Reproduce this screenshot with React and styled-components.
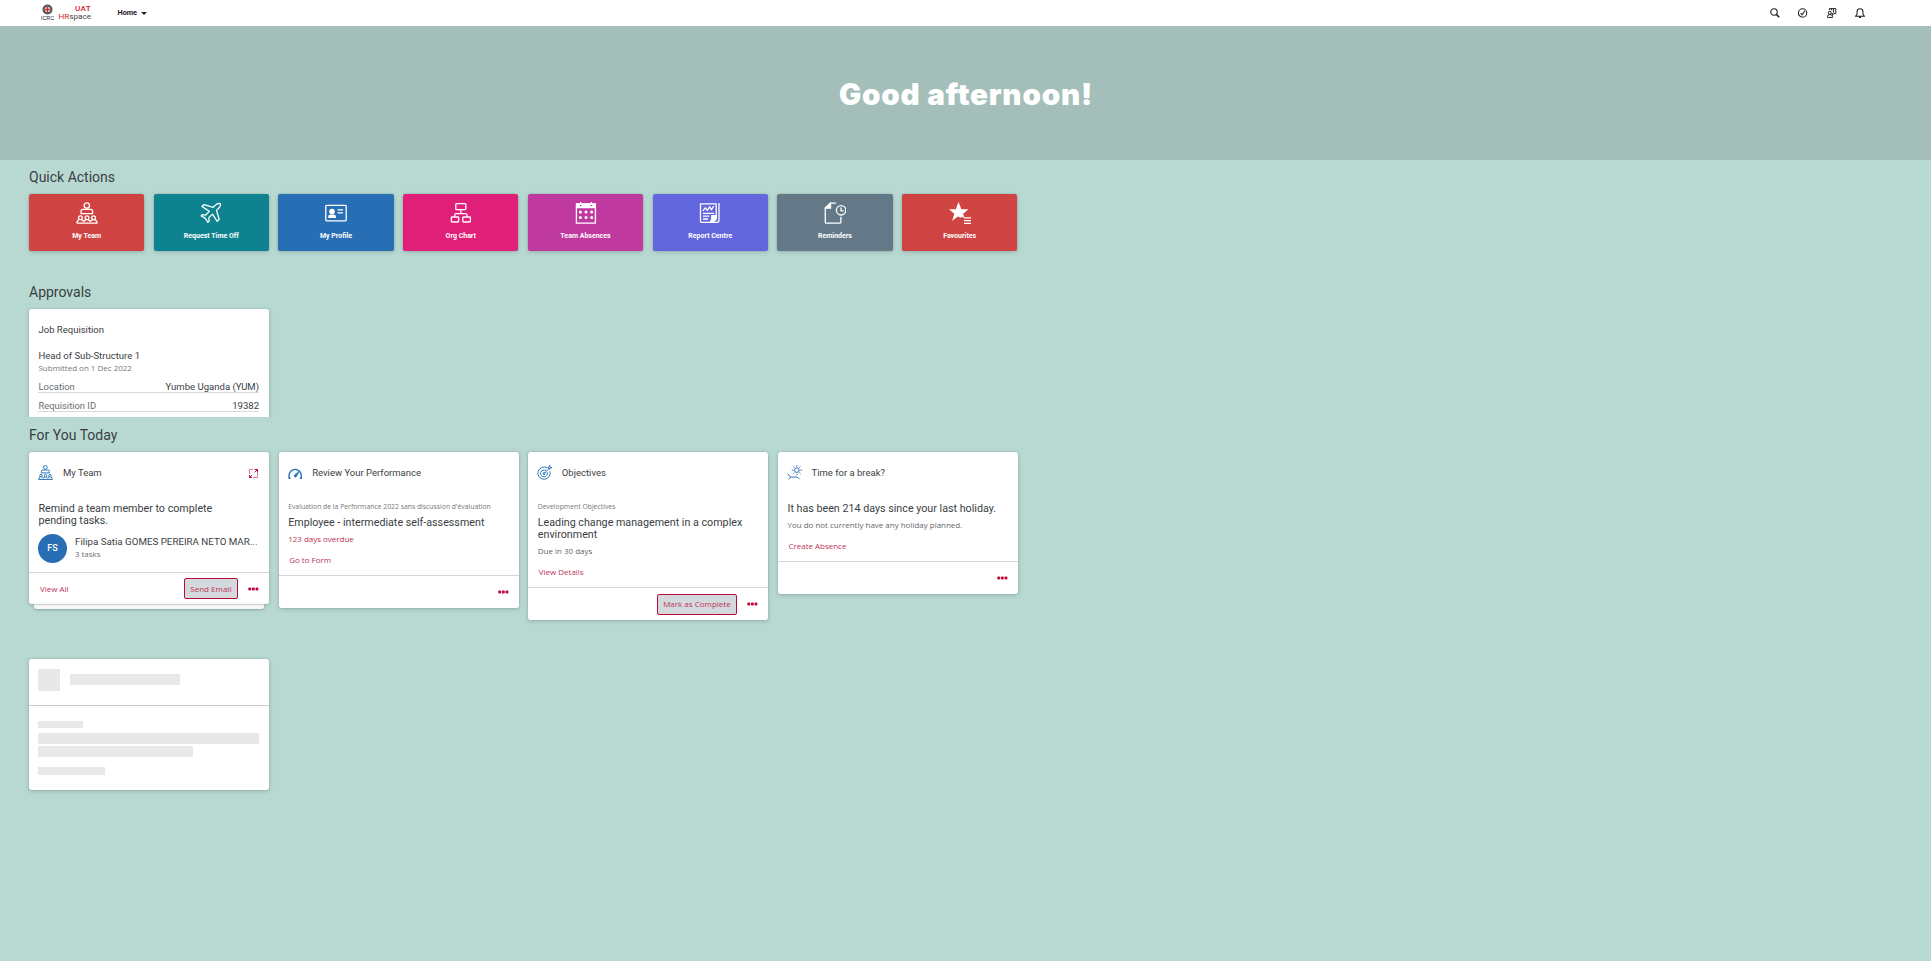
import React from "react";
import styled, { createGlobalStyle } from "styled-components";

const Global = createGlobalStyle`
  * { box-sizing: border-box; }
  body { margin: 0; background: #b8d9d2; font-family: Roboto, "Liberation Sans", sans-serif; color: #3a3e43; }
  svg { display: block; flex: none; }
`;

const Page = styled.div`
  min-height: 961px;
  background: #b8d9d2;
`;

/* Top bar */
const TopBar = styled.header`
  display: flex;
  align-items: center;
  height: 26px;
  padding: 0 66px 0 41px;
  background: #fff;
`;
const Logo = styled.div`
  display: flex;
  align-items: flex-start;
  height: 26px;
`;
const Emblem = styled.div`
  display: flex;
  flex-direction: column;
  align-items: center;
  width: 13px;
  padding-top: 4px;
  font: 400 5.4px/6px "Liberation Sans", sans-serif;
  color: #222;
`;
const Wordmark = styled.div`
  width: 33px;
  margin-left: 4px;
  padding-top: 5px;
  font-size: 8.1px;
  line-height: 7.5px;
  text-align: right;
  white-space: nowrap;
  color: #444;
`;
const Red = styled.span`
  color: #d2232a;
  font-weight: ${(p) => (p.$strong ? 500 : 400)};
  letter-spacing: ${(p) => (p.$strong ? "0.3px" : "0")};
`;
const HomeMenu = styled.button`
  display: flex;
  align-items: center;
  gap: 3.5px;
  margin-left: 26.5px;
  padding: 0;
  border: 0;
  background: none;
  font: 700 7.3px/10px Roboto, sans-serif;
  color: #1d1426;
`;
const Caret = styled.span`
  border: 3px solid transparent;
  border-top-color: #222;
  border-bottom: 0;
`;
const Tools = styled.nav`
  display: flex;
  align-items: center;
  gap: 18.3px;
  margin-left: auto;
  color: #222;
`;

const Banner = styled.div`
  display: flex;
  justify-content: center;
  height: 134px;
  padding: 48px 0 0 1px;
  background: #a4bfba;
`;
const Greeting = styled.h1`
  margin: 0;
  font: 900 29.6px/41px Inter, sans-serif;
  letter-spacing: 0.8px;
  color: #fff;
`;

/* Content */
const Main = styled.main`
  width: 1018px;
  padding: 7px 0 0 29px;
`;
const Section = styled.section`
  margin-bottom: ${(p) => p.$after || 0}px;
`;
const SectionTitle = styled.h2`
  height: 27px;
  margin: 0;
  font-weight: 400;
  font-size: 14px;
  line-height: 20px;
  color: #3a3e43;
`;
const Tiles = styled.div`
  display: grid;
  width: 988.3px;
  grid-template-columns: repeat(8, 1fr);
  gap: 9.5px;
`;
const Tile = styled.button`
  display: flex;
  flex-direction: column;
  align-items: center;
  gap: 7px;
  height: 57px;
  padding: 8px 0 0;
  border: 0;
  border-radius: 2.5px;
  background: ${(p) => p.$color};
  box-shadow: 0 0 1px rgba(70, 90, 90, 0.5), 0 1px 4px rgba(70, 90, 90, 0.3);
  font: 700 7px/10px Roboto, sans-serif;
  color: #fff;
`;
const CardRow = styled.div`
  display: grid;
  grid-template-columns: repeat(4, 240px);
  justify-content: space-between;
  align-items: start;
  height: 207px;
`;
const Card = styled.article`
  width: 240px;
  border-radius: 2.5px;
  background: #fff;
  box-shadow: 0 0 1px rgba(70, 90, 90, 0.5), 0 1px 4px rgba(70, 90, 90, 0.3);
`;
const Stack = styled.div`
  display: flex;
  flex-direction: column;
  align-items: center;
`;
const StackEdge = styled.div`
  width: 230px;
  height: 5px;
  border-radius: 0 0 2.5px 2.5px;
  background: #f7f7f7;
  box-shadow: 0 1px 3px rgba(70, 90, 90, 0.4), inset 0 1px 1px rgba(70, 90, 90, 0.25);
`;
const CardHead = styled.div`
  display: flex;
  align-items: center;
  height: ${(p) => p.$height || 50}px;
  padding: 0 10px ${(p) => (p.$height ? 0 : 8)}px 9px;
`;
const CardName = styled.h3`
  flex: 1;
  margin: 0 0 0 ${(p) => p.$indent}px;
  font-weight: 400;
  font-size: 9.5px;
  line-height: 12px;
`;
const Body = styled.div`
  padding: 0 10px ${(p) => p.$bottom ?? 10}px 9.5px;
`;
const Kicker = styled.div`
  margin-bottom: 5px;
  font-family: "Open Sans", sans-serif;
  font-size: 6.84px;
  line-height: 9px;
  white-space: nowrap;
  color: #74777a;
`;
const Headline = styled.div`
  width: ${(p) => p.$width || 215}px;
  padding-top: 0.6px;
  margin-bottom: -0.6px;
  font-size: 10.72px;
  line-height: 12px;
`;
const Meta = styled.div`
  margin-top: 6px;
  font-family: "Open Sans", sans-serif;
  font-size: 7.98px;
  line-height: 10px;
  white-space: nowrap;
  color: ${(p) => (p.$late ? "#bb3350" : "#64676a")};
`;
const Link = styled.a`
  display: block;
  margin: ${(p) => p.$top ?? 11}px 0 0 1px;
  font-family: "Open Sans", sans-serif;
  font-size: 7.98px;
  line-height: 10px;
  color: #bb3355;
`;
const Foot = styled.div`
  display: flex;
  align-items: center;
  height: ${(p) => p.$height || 33}px;
  padding: 0 10px;
  border-top: 1px solid #d5d5d5;
`;
const Spacer = styled.span`
  flex: 1;
`;
const ActionButton = styled.button`
  height: 21px;
  margin-right: 10px;
  padding: 0 5.6px;
  border: 1px solid #bb0a38;
  border-radius: 2px;
  background: #d3d9dd;
  font: 400 8px/18px "Open Sans", sans-serif;
  color: #c03558;
`;
const Person = styled.div`
  display: flex;
  align-items: center;
  gap: 8px;
  margin: 8px 0 0 -0.5px;
`;
const Avatar = styled.div`
  width: 29px;
  height: 29px;
  border-radius: 50%;
  background: #286eb4;
  font-weight: 500;
  font-size: 9px;
  line-height: 29px;
  text-align: center;
  color: #fff;
`;
const PersonName = styled.div`
  padding-bottom: 1px;
  font-size: 9.75px;
  line-height: 12px;
  white-space: nowrap;
`;
const PersonNote = styled.div`
  padding-bottom: 2px;
  font-family: "Open Sans", sans-serif;
  font-size: 7.9px;
  line-height: 11px;
  color: #6a6d70;
`;

/* Approvals */
const ApprovalClip = styled.div`
  height: 116px;
  clip-path: inset(-8px -8px 8px -8px);
`;
const ApprovalCard = styled(Card)`
  height: 130px;
`;
const ApprovalTitle = styled.div`
  font-size: 9.55px;
  line-height: 12px;
`;
const ApprovalDate = styled.div`
  margin: 1px 0;
  font-family: "Open Sans", sans-serif;
  font-size: 7.98px;
  line-height: 10px;
  color: #74777a;
`;
const Field = styled.div`
  display: flex;
  justify-content: space-between;
  margin-left: -0.5px;
  padding: 7px 0 0 0.5px;
  border-bottom: 1px solid #d9d9d9;
  font-size: 9.55px;
  line-height: 11px;
`;
const FieldName = styled.span`
  font-size: 9.4px;
  color: #6a6d70;
`;

/* Loading placeholder */
const SkeletonHead = styled.div`
  display: flex;
  gap: 10px;
  height: 47px;
  padding: 10px 9px 0;
  border-bottom: 1px solid #cbcbcb;
`;
const SkeletonBody = styled.div`
  height: 84px;
  padding: 15px 9px 0;
`;
const Bar = styled.div`
  width: ${(p) => p.$w}px;
  height: ${(p) => p.$h}px;
  margin-top: ${(p) => p.$top || 0}px;
  background: #e8e8e8;
`;

/* Icons */
const Icon = ({ size = 22, box = 22, children, sw = 1.3 }) => (
  <svg width={size} height={size} viewBox={`0 0 ${box} ${box}`} fill="none" stroke="currentColor" strokeWidth={sw} strokeLinejoin="round">
    {children}
  </svg>
);
const teamShape = (
  <>
    <circle cx="10.8" cy="3.5" r="2.7" />
    <path d="M5 11.6V9.4q0-2 2-2h7.6q2 0 2 2v2.2z" />
    <circle cx="4.4" cy="15.8" r="1.9" />
    <circle cx="11" cy="15.8" r="1.9" />
    <circle cx="17.6" cy="15.8" r="1.9" />
    <path d="M.9 21.2q0-3 2.2-3.4M5.6 17.8q1.6.4 2.1 1.7.6-1.3 2.2-1.7M12.1 17.8q1.6.4 2.2 1.7.5-1.3 2.1-1.7M18.8 17.8q2.2.4 2.2 3.4H.9" />
  </>
);
const tileIcons = {
  team: teamShape,
  plane: <path d="M20.3 1.7q-2.6-.8-4.6 1.2L13.2 5.3 4 2.6 1.9 4.4l7.4 4.9-3.6 3.8-3.5-.4-1 1.2 4 2.2 2.6 4.2 1.3-1-.3-3.7 3.7-3.5 4.7 7.2 2-2-2.7-8.9 2.6-2.6q2-2 1.2-4.1z" />,
  profile: (
    <>
      <rect x=".8" y="3.3" width="20.4" height="15.6" rx=".8" />
      <g fill="currentColor" stroke="none">
        <circle cx="7" cy="9.5" r="2.8" />
        <path d="M3.2 16v-1.2q0-2.3 2.2-2.3h3.4q2.2 0 2.2 2.3V16z" />
      </g>
      <path d="M12.5 7.8h5.5M12.5 10.8h5.5" />
    </>
  ),
  org: (
    <>
      <rect x="5.8" y="1.7" width="10" height="6" rx=".8" />
      <path d="M10.8 7.7v4M4.8 15v-2q0-1.3 1.3-1.3h9.6q1.3 0 1.3 1.3v2" />
      <rect x="1.3" y="15" width="7.4" height="5" rx=".8" />
      <rect x="12.8" y="15" width="7.6" height="5" rx=".8" />
    </>
  ),
  calendar: (
    <>
      <rect x="1.4" y="2" width="19" height="19.2" />
      <path fill="currentColor" stroke="none" d="M1 1.6h3.8v1.8q.9 1.6 1.8 0V1.6h8.8v1.8q.9 1.6 1.8 0V1.6H21v4.6H1z" />
      <path d="M5.7 0v3M16.3 0v3" />
      <g fill="currentColor" stroke="none">
        {[5.4, 11, 16.6].map((x) => [10, 15.4].map((y) => <circle key={`${x}-${y}`} cx={x} cy={y} r="1.5" />))}
      </g>
    </>
  ),
  report: (
    <>
      <path d="M17.2 14V1.8H1.5v17.7q0 .8.8.8h9M20 1v17.6q0 1.7-2 1.7h-6" />
      <path d="M3.8 8.8l2.5-3 2 2.5 2.4-3.5 1.8 3 2.2-3.8M4 11.4h11M4 14.2h6.3M4 17h5" />
      <path fill="currentColor" d="M17.4 13.7h-4.6v2.8q0 1.5-1.9 3.8 5 0 6.5-4z" />
    </>
  ),
  reminder: (
    <>
      <path d="M12 1.2H6.5L1.3 6v14.2q0 1 1 1h13.6q1 0 1-1v-5.4" />
      <path fill="currentColor" d="M6.5 1v5.2H1.2z" />
      <circle cx="17.1" cy="8.3" r="4.7" />
      <path d="M17 5.5v3.3h2.6" />
    </>
  ),
  favourite: (
    <>
      <path fill="currentColor" stroke="none" d="M9.5 0l2.9 7.2 7.1.1-5.4 4.5 1.2 4-2.6-.8-1 .7-3-1.2-5.6 4.6 2.2-7.4L0 7.3l6.8-.1z" />
      <path d="M15 15.8h7M15 18.6h7M15 21.4h7" />
    </>
  ),
};
const cardIcons = {
  team: teamShape,
  gauge: (
    <>
      <path strokeWidth="2" d="M3.8 19.5H1.5v-4a9 9 0 0 1 18 0v4h-2.3" />
      <path fill="currentColor" strokeWidth="1" d="M16.6 9l-4.2 8q-1.4 1.6-3 0-.9-1.6.6-2.8z" />
    </>
  ),
  target: (
    <>
      <path d="M14.9 4.2a9 9 0 1 0 4 5" />
      <path d="M13.2 8.4a5 5 0 1 0 1.6 2" />
      <circle cx="10.3" cy="12.6" r="1.5" />
      <path d="M10.3 12.6l8-8M16.6 5.4V2.7L19 .5v3h3l-2.3 2.2z" />
    </>
  ),
  beach: (
    <>
      <circle cx="14.5" cy="7.5" r="3.4" />
      <path d="M14.5 0v2.4M14.5 12.6V15M7 7.5h2.4M19.6 7.5H22M9.2 2.2l1.7 1.7M18.1 11.1l1.7 1.7M19.8 2.2l-1.7 1.7M10.9 11.1l-1.7 1.7" />
      <path d="M.5 12.5l4.8 5.3 8.7-.2q2.2 0 4.5 3.2M5.3 17.8l-3 3.2" />
    </>
  ),
};
const CardGlyph = styled.span`
  margin-top: -1px;
  color: #286eb4;
`;
const RedGlyph = styled.span`
  color: #bb0a38;
`;

const Dots = () => (
  <RedGlyph>
    <svg width="11" height="4" viewBox="0 0 11 4" fill="currentColor">
      <rect x=".3" y=".5" width="2.9" height="3" rx="1" />
      <rect x="3.9" y=".5" width="2.9" height="3" rx="1" />
      <rect x="7.5" y=".5" width="2.9" height="3" rx="1" />
    </svg>
  </RedGlyph>
);

const CardTop = ({ icon, indent, children, expand }) => (
  <CardHead>
    <CardGlyph>
      <Icon size={15} sw={1.4}>{cardIcons[icon]}</Icon>
    </CardGlyph>
    <CardName $indent={indent}>{children}</CardName>
    {expand && (
      <RedGlyph>
        <Icon size={11} box={11} sw={1}>
          <path d="M5 1.5H1.5V6M5 9.5h4.5V5" opacity=".5" />
          <path d="M6.5 1.5h3v3M9.5 1.5L6.6 4.4M1.5 9.5l2.6-2.6M1.5 7v2.5H4" />
        </Icon>
      </RedGlyph>
    )}
  </CardHead>
);

const quickActions = [
  ["My Team", "#d04343", "team"],
  ["Request Time Off", "#0f828f", "plane"],
  ["My Profile", "#286eb4", "profile"],
  ["Org Chart", "#df1f78", "org"],
  ["Team Absences", "#c0399f", "calendar"],
  ["Report Centre", "#6367de", "report"],
  ["Reminders", "#647987", "reminder"],
  ["Favourites", "#d04343", "favourite"],
];

export default function App() {
  return (
    <Page>
      <Global />
      <TopBar>
        <Logo>
          <Emblem>
            <svg width="11" height="11" viewBox="0 0 11 11">
              <circle cx="5.5" cy="5.5" r="3.9" fill="#fff" stroke="#4a4a4a" strokeWidth="2.2" />
              <circle cx="5.5" cy="5.5" r="3.9" fill="none" stroke="#8a8a8a" strokeWidth="0.8" strokeDasharray="1 1.1" />
              <path d="M5.5 3v5M3 5.5h5" stroke="#d2232a" strokeWidth="1.5" />
            </svg>
            ICRC
          </Emblem>
          <Wordmark>
            <Red $strong>UAT</Red>
            <br />
            <Red>HR</Red>space
          </Wordmark>
        </Logo>
        <HomeMenu>
          Home <Caret />
        </HomeMenu>
        <Tools>
          <Icon size={10} box={10} sw={1.1}>
            <circle cx="4" cy="4" r="3.2" />
            <path strokeWidth="1.6" d="M6.4 6.4l2.8 2.8" />
          </Icon>
          <Icon size={10} box={10} sw={1.1}>
            <circle cx="4.6" cy="5" r="4.2" />
            <path d="M2.6 5l1.6 1.8 2.6-4" />
          </Icon>
          <Icon size={10} box={10} sw={1}>
            <circle cx="2.8" cy="4.8" r="1.5" />
            <path d="M.4 9.4V8.6q0-1.9 1.9-1.9h1.5q1.9 0 1.9 1.9v.8z" />
            <path d="M2.4 2V.6h6.4v5H7L5.4 7V5.2M4.4 2.2V.8M6.4 4.6V1" />
          </Icon>
          <Icon size={10} box={10} sw={1.1}>
            <path d="M.5 8.2h9Q7.9 7.2 7.9 5V3.6Q7.9.8 5 .8T2.1 3.6V5Q2.1 7.2.5 8.2zM4 9.4h2" />
          </Icon>
        </Tools>
      </TopBar>
      <Banner>
        <Greeting>Good afternoon!</Greeting>
      </Banner>

      <Main>
        <Section $after={31}>
          <SectionTitle>Quick Actions</SectionTitle>
          <Tiles>
            {quickActions.map(([label, color, icon]) => (
              <Tile key={label} $color={color}>
                <Icon>{tileIcons[icon]}</Icon>
                {label}
              </Tile>
            ))}
          </Tiles>
        </Section>

        <Section>
          <SectionTitle>Approvals</SectionTitle>
          <ApprovalClip>
            <ApprovalCard>
              <CardHead $height={41}>
                <CardName $indent={0.5}>Job Requisition</CardName>
              </CardHead>
              <Body>
                <ApprovalTitle>Head of Sub-Structure 1</ApprovalTitle>
                <ApprovalDate>Submitted on 1 Dec 2022</ApprovalDate>
                <Field>
                  <FieldName>Location</FieldName>
                  <span>Yumbe Uganda (YUM)</span>
                </Field>
                <Field>
                  <FieldName>Requisition ID</FieldName>
                  <span>19382</span>
                </Field>
              </Body>
            </ApprovalCard>
          </ApprovalClip>
        </Section>

        <Section>
          <SectionTitle>For You Today</SectionTitle>
          <CardRow>
            <Stack>
              <Card>
                <CardTop icon="team" indent={10} expand>My Team</CardTop>
                <Body $bottom={9}>
                  <Headline $width={190}>Remind a team member to complete pending tasks.</Headline>
                  <Person>
                    <Avatar>FS</Avatar>
                    <div>
                      <PersonName>Filipa Satia GOMES PEREIRA NETO MAR...</PersonName>
                      <PersonNote>3 tasks</PersonNote>
                    </div>
                  </Person>
                </Body>
                <Foot $height={32}>
                  <Link $top={0}>View All</Link>
                  <Spacer />
                  <ActionButton>Send Email</ActionButton>
                  <Dots />
                </Foot>
              </Card>
              <StackEdge />
            </Stack>

            <Card>
              <CardTop icon="gauge" indent={9.5}>Review Your Performance</CardTop>
              <Body>
                <Kicker>Evaluation de la Performance 2022 sans discussion d'évaluation</Kicker>
                <Headline>Employee - intermediate self-assessment</Headline>
                <Meta $late>123 days overdue</Meta>
                <Link>Go to Form</Link>
              </Body>
              <Foot>
                <Spacer />
                <Dots />
              </Foot>
            </Card>

            <Card>
              <CardTop icon="target" indent={9.5}>Objectives</CardTop>
              <Body>
                <Kicker>Development Objectives</Kicker>
                <Headline>Leading change management in a complex environment</Headline>
                <Meta>Due in 30 days</Meta>
                <Link>View Details</Link>
              </Body>
              <Foot>
                <Spacer />
                <ActionButton>Mark as Complete</ActionButton>
                <Dots />
              </Foot>
            </Card>

            <Card>
              <CardTop icon="beach" indent={9.5}>Time for a break?</CardTop>
              <Body>
                <Headline>It has been 214 days since your last holiday.</Headline>
                <Meta>You do not currently have any holiday planned.</Meta>
                <Link>Create Absence</Link>
              </Body>
              <Foot>
                <Spacer />
                <Dots />
              </Foot>
            </Card>
          </CardRow>
        </Section>

        <Card>
          <SkeletonHead>
            <Bar $w={22} $h={22} />
            <Bar $w={110} $h={11} $top={5} />
          </SkeletonHead>
          <SkeletonBody>
            <Bar $w={45} $h={7} />
            <Bar $w={221} $h={11} $top={5} />
            <Bar $w={155} $h={11} $top={2} />
            <Bar $w={67} $h={8} $top={10} />
          </SkeletonBody>
        </Card>
      </Main>
    </Page>
  );
}
